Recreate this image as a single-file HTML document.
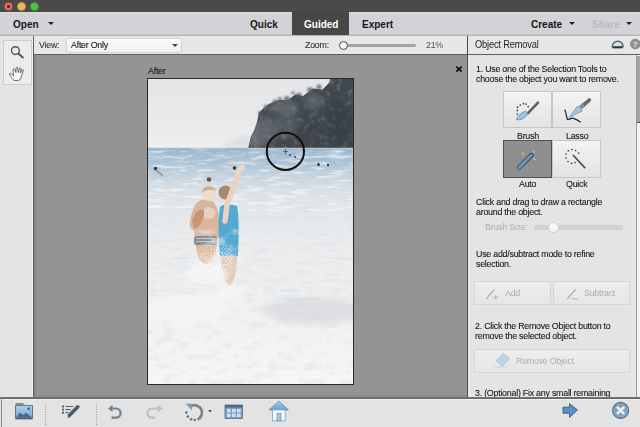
<!DOCTYPE html>
<html><head><meta charset="utf-8">
<style>
*{margin:0;padding:0;box-sizing:border-box}
html,body{width:640px;height:427px;overflow:hidden;background:#e4e4e4;font-family:"Liberation Sans",sans-serif;position:relative}
.a{position:absolute}
svg{display:block}
#title{left:0;top:0;width:640px;height:12px;background:#4a4a4b}
.tl{width:9px;height:9px;border-radius:50%;top:2px}
#menu{left:0;top:12px;width:640px;height:23px;background:#d3d2d6;border-top:1px solid #dddce0;border-bottom:1px solid #c6c6c8}
.mt{font-weight:bold;font-size:10px;color:#161616;top:18.5px;line-height:12px}
#guided{left:292px;top:11px;width:57px;height:25px;background:#474747}
.tri{width:0;height:0;border-left:3px solid transparent;border-right:3px solid transparent;border-top:3px solid #222}
#sep{left:0;top:35px;width:640px;height:2px;background:#b4b4b6}
#left{left:0;top:36px;width:33px;height:362px;background:#e4e4e4}
#lline{left:33px;top:36px;width:1px;height:362px;background:#626262}
#viewbar{left:34px;top:36px;width:433px;height:18px;background:#e7e7e7}
#canvas{left:34px;top:55px;width:433px;height:343px;background:#949494}
#vline2{left:34px;top:54px;width:606px;height:1px;background:#5e5e5e}
#rline{left:467px;top:36px;width:1px;height:362px;background:#4a4a4a}
#rpanel{left:468px;top:55px;width:172px;height:343px;background:#e4e4e7;border-left:2px solid #ebebed}
#rhead{left:468px;top:36px;width:172px;height:18px;background:#e7e7e7}
.t{font-size:9.5px;color:#151515;line-height:10px;white-space:nowrap;letter-spacing:-0.25px;transform:scaleX(0.93);transform-origin:0 0;-webkit-text-stroke:0.1px #151515}
.btn{background:linear-gradient(#f3f3f3,#e3e3e3);border:1px solid #c6c6c6}
.dis{color:#adadad;-webkit-text-stroke:0}
#bottom{left:0;top:399px;width:640px;height:28px;background:#e3e3e3;border-top:1px solid #f2f2f2}
.dots{width:0;border-left:1px dotted #9a9a9a}
</style></head><body>
<div class="a" id="title"></div>
<div class="a tl" style="left:4px;background:radial-gradient(circle,#5a2a20 0,#5a2a20 1.3px,#de7a62 1.8px,#de6a55 100%);border:1px solid #b8503e"></div>
<div class="a tl" style="left:17px;background:#e6bd55;border:1px solid #c49a3a"></div>
<div class="a tl" style="left:30px;background:#55c04c;border:1px solid #3c9a35"></div>
<div class="a" id="menu"></div>
<div class="a" id="guided"></div>
<div class="a mt" style="left:13px">Open</div>
<div class="a tri" style="left:48px;top:22px"></div>
<div class="a mt" style="left:250px">Quick</div>
<div class="a mt" style="left:304px;color:#fff">Guided</div>
<div class="a mt" style="left:362px">Expert</div>
<div class="a mt" style="left:531px">Create</div>
<div class="a tri" style="left:569px;top:22px"></div>
<div class="a mt" style="left:592px;color:#bcbcbf">Share</div>
<div class="a tri" style="left:626px;top:22px"></div>
<div class="a" id="sep"></div>
<div class="a" id="left"></div>
<div class="a" id="lline"></div>
<div class="a" id="viewbar"></div>
<div class="a" id="rhead"></div>
<div class="a" id="vline2"></div>
<div class="a" id="canvas"></div>
<div class="a" style="left:34px;top:55px;width:3px;height:343px;background:linear-gradient(90deg,#7a7a7a,#8c8c8c 60%,#949494)"></div>
<div class="a" style="left:32px;top:36px;width:1px;height:362px;background:#efefef"></div>
<div class="a" id="rline"></div>
<div class="a" id="rpanel"></div>

<!-- left tools -->
<div class="a" style="left:3px;top:40px;width:29px;height:45px;border:1px solid #cdcdcd;background:#ececec"></div>
<svg class="a" style="left:3px;top:40px" width="29" height="45" viewBox="3 40 29 45">
<circle cx="15.4" cy="50.6" r="3.9" fill="none" stroke="#555" stroke-width="1.4"/>
<path d="M18.4,53.6 L22.8,57.6" stroke="#555" stroke-width="2" stroke-linecap="round"/>
<path d="M9.6,73.6 C10.5,73 12,74.5 13.5,76 L13,69.8 C13,68.6 14.4,68.3 14.8,69.5 L15.8,72.5 L16.2,67.8 C16.3,66.8 17.6,66.8 17.7,67.8 L18.2,72.5 L19.6,68.5 C19.9,67.5 21.2,67.8 21,68.8 L20.3,73 L22.2,70 C22.7,69.2 23.8,69.7 23.4,70.6 L21.6,75.5 C21,78 20.2,80.5 18,80.5 L15,80.5 C13.5,80.5 12.5,79 11.5,77.5 C10.7,76.3 9.5,75 9.6,73.6 Z" fill="#f5f5f5" stroke="#5e5e5e" stroke-width="0.9" stroke-linejoin="round"/>
</svg>

<!-- view bar -->
<div class="a t" style="left:39px;top:40px;color:#333;-webkit-text-stroke:0.1px #333">View:</div>
<div class="a" style="left:66px;top:38px;width:116px;height:15px;border:1px solid #d2d2d2;background:linear-gradient(#fbfbfb,#eeeeee)"></div>
<div class="a t" style="left:71px;top:40px">After Only</div>
<div class="a tri" style="left:172px;top:44px;border-top-color:#444;border-left-width:3.5px;border-right-width:3.5px;border-top-width:3.5px"></div>
<div class="a t" style="left:305px;top:40px;color:#333;-webkit-text-stroke:0.1px #333">Zoom:</div>
<div class="a" style="left:340px;top:44px;width:76px;height:3px;border-radius:1.5px;background:#a3a3a3"></div>
<div class="a" style="left:338.5px;top:41px;width:9px;height:9px;border-radius:50%;border:1.3px solid #484848;background:#f4f4f4"></div>
<div class="a t" style="left:426px;top:40px;color:#555;-webkit-text-stroke:0">21%</div>

<!-- canvas -->
<div class="a t" style="left:148px;top:66px;color:#1a1a1a">After</div>
<svg class="a" style="left:455px;top:65px" width="8" height="8" viewBox="0 0 8 8"><path d="M1.3,1.6 L6.7,6.6 M6.7,1.6 L1.3,6.6" stroke="#111" stroke-width="1.9"/></svg>
<div class="a" style="left:147px;top:78px;width:207px;height:307px;background:#2a2a2a"></div>
<div class="a" id="photo" style="left:148px;top:79px;width:205px;height:305px;background:#eee;overflow:hidden"><svg width="205" height="305" viewBox="0 0 205 305">
<defs>
<linearGradient id="sky" x1="0" y1="0" x2="0" y2="68" gradientUnits="userSpaceOnUse">
<stop offset="0" stop-color="#e5e6e8"/><stop offset="0.6" stop-color="#e9e9eb"/><stop offset="1" stop-color="#efeff0"/>
</linearGradient>
<linearGradient id="sea" x1="0" y1="68" x2="0" y2="305" gradientUnits="userSpaceOnUse">
<stop offset="0" stop-color="#98b5cc"/><stop offset="0.06" stop-color="#a9c0d3"/><stop offset="0.11" stop-color="#c0cfdb"/><stop offset="0.18" stop-color="#d9e0e6"/><stop offset="0.26" stop-color="#e2e7ea"/><stop offset="0.45" stop-color="#ededee"/><stop offset="1" stop-color="#f6f6f6"/>
</linearGradient>
<linearGradient id="wmask" x1="0" y1="68" x2="0" y2="305" gradientUnits="userSpaceOnUse">
<stop offset="0" stop-color="#fff" stop-opacity="1"/><stop offset="0.5" stop-color="#fff" stop-opacity="0.7"/><stop offset="1" stop-color="#fff" stop-opacity="0.5"/>
</linearGradient>
<filter id="waves" x="0" y="0" width="100%" height="100%">
<feTurbulence type="fractalNoise" baseFrequency="0.04 0.22" numOctaves="3" seed="7"/>
<feColorMatrix type="matrix" values="0 0 0 0 0.68  0 0 0 0 0.75  0 0 0 0 0.81  0 0 0 -3.2 1.5"/>
<feComposite in2="SourceGraphic" operator="in"/>
</filter>
<filter id="foamf" x="0" y="0" width="100%" height="100%">
<feTurbulence type="fractalNoise" baseFrequency="0.07 0.12" numOctaves="4" seed="11"/>
<feColorMatrix type="matrix" values="0 0 0 0 0.8  0 0 0 0 0.81  0 0 0 0 0.83  0 0 0 -4.5 2.3"/>
<feComposite in2="SourceGraphic" operator="in"/>
</filter>
<filter id="tex" x="0" y="0" width="100%" height="100%">
<feTurbulence type="fractalNoise" baseFrequency="0.18" numOctaves="3" seed="3"/>
<feColorMatrix type="matrix" values="0 0 0 0 0.55  0 0 0 0 0.58  0 0 0 0 0.6  0 0 0 -2.2 1.05"/>
<feComposite in2="SourceGraphic" operator="in"/>
</filter>
<filter id="bl"><feGaussianBlur stdDeviation="0.6"/></filter>
<filter id="bl2"><feGaussianBlur stdDeviation="3"/></filter>
<clipPath id="cliffclip"><path id="cliffp" d="M182,0 L182,3 174.5,10.5 165,9.5 155,17 147.7,15.3 140,21 130,21 120.8,25 115,29.7 111,33.5 109,43 106.4,50.8 102.6,58.5 100.6,67 100,69 205,69 205,0 Z"/></clipPath>
</defs>
<rect width="205" height="305" fill="url(#sky)"/>
<path d="M70,68 C80,62 92,56 104,57 L104,68 Z" fill="#dcdee2" filter="url(#bl2)"/>
<rect y="68.8" width="205" height="237" fill="url(#sea)"/>
<rect y="69" width="205" height="160" fill="#fff" filter="url(#waves)" opacity="0.8"/>
<filter id="dwaves" x="0" y="0" width="100%" height="100%">
<feTurbulence type="fractalNoise" baseFrequency="0.06 0.35" numOctaves="3" seed="21"/>
<feColorMatrix type="matrix" values="0 0 0 0 0.5  0 0 0 0 0.61  0 0 0 0 0.71  0 0 0 -5 2.6"/>
<feComposite in2="SourceGraphic" operator="in"/>
</filter>
<linearGradient id="dwm" x1="0" y1="0" x2="0" y2="1"><stop offset="0" stop-color="#fff" stop-opacity="1"/><stop offset="1" stop-color="#fff" stop-opacity="0"/></linearGradient>
<rect y="69" width="205" height="50" fill="url(#dwm)" filter="url(#dwaves)" opacity="0.55"/>
<filter id="wwaves" x="0" y="0" width="100%" height="100%">
<feTurbulence type="fractalNoise" baseFrequency="0.05 0.3" numOctaves="3" seed="33"/>
<feColorMatrix type="matrix" values="0 0 0 0 1  0 0 0 0 1  0 0 0 0 1  0 0 0 -5 2.4"/>
<feComposite in2="SourceGraphic" operator="in"/>
</filter>
<rect y="72" width="205" height="60" fill="#fff" filter="url(#wwaves)" opacity="0.5"/>
<rect y="140" width="205" height="165" fill="#fff" filter="url(#foamf)" opacity="0.75"/>
<ellipse cx="165" cy="232" rx="50" ry="14" fill="#cfd2d5" opacity="0.55" filter="url(#bl2)"/>
<!-- cliff -->
<path d="M182,0 L182,3 174.5,10.5 165,9.5 155,17 147.7,15.3 140,21 130,21 120.8,25 115,29.7 111,33.5 109,43 106.4,50.8 102.6,58.5 100.6,67.5 100,69.5 205,69.5 205,0 Z" fill="#40474d"/>
<path d="M182,0 L182,3 174.5,10.5 165,9.5 155,17 147.7,15.3 140,21 130,21 120.8,25 115,29.7 111,33.5 109,43 106.4,50.8 102.6,58.5 100.6,67 100,69 205,69 205,0 Z" fill="#fff" filter="url(#tex)" opacity="0.38"/>
<g clip-path="url(#cliffclip)" filter="url(#bl2)" opacity="0.45">
<ellipse cx="108" cy="56" rx="9" ry="14" fill="#a0a6aa"/>
<ellipse cx="118" cy="52" rx="12" ry="14" fill="#858d92"/>
<ellipse cx="140" cy="45" rx="10" ry="14" fill="#6b7378"/>
<ellipse cx="135" cy="28" rx="16" ry="6" fill="#8a9196"/>
<ellipse cx="165" cy="22" rx="10" ry="8" fill="#7a8287"/>
<ellipse cx="192" cy="45" rx="12" ry="22" fill="#30373c"/>
<ellipse cx="160" cy="55" rx="14" ry="10" fill="#3a4146"/>
</g>
<filter id="bl3"><feGaussianBlur stdDeviation="1.3"/></filter>
<g fill="#5d656a" filter="url(#bl3)" opacity="0.85">
<circle cx="171" cy="8" r="2.5"/><circle cx="162" cy="11" r="2.8"/><circle cx="151" cy="16" r="2.5"/><circle cx="139" cy="20" r="3"/><circle cx="127" cy="23" r="2.5"/><circle cx="118" cy="28" r="2.2"/><circle cx="112" cy="34" r="2"/><circle cx="184" cy="3" r="2.5"/><circle cx="145" cy="14" r="1.8"/><circle cx="132" cy="20" r="2"/>
</g>
<path d="M100,69.3 H205" stroke="#cfd8df" stroke-width="1"/>
<!-- swimmers -->
<g fill="#3a3a3a">
<circle cx="7.5" cy="89.5" r="1.8"/>
<circle cx="142" cy="76" r="0.9"/>
<circle cx="147" cy="78" r="0.9"/>
<circle cx="170.5" cy="85.5" r="1.5"/>
<circle cx="180" cy="86" r="1.2"/>
</g>
<path d="M8,91 L15,97" stroke="#9a8a80" stroke-width="1.6"/>
<!-- children -->
<g filter="url(#bl)">
<!-- left child -->
<path d="M47,126 C50,121 58,119 64,122 C70,126 72,138 71,150 L69,166 C67,176 64,184 58,185 C52,184 49,176 48,168 L46,152 C42,150 41,146 42,142 C43,136 45,130 47,126 Z" fill="#d9b59a"/>
<path d="M44,142 C46,134 52,128 56,132 C56,140 52,148 46,150 Z" fill="#c49676"/>
<path d="M56,130 C60,126 66,128 68,134 C66,140 60,142 56,138 Z" fill="#e8d0bc"/>
<rect x="46" y="157" width="23" height="9" rx="3" fill="#858c92"/>
<path d="M48,159.5 h19 M48,162.5 h19" stroke="#c3cbd1" stroke-width="1"/>
<circle cx="61" cy="115" r="7" fill="#ecdccb"/>
<path d="M54,114 C54,106 66,105 68,112 C64,110 58,110 54,114 Z" fill="#cfae8c"/>
<circle cx="61" cy="100.5" r="2.3" fill="#6b5648"/>
<!-- right child -->
<path d="M72,128 C75,125 82,125 89,127 C91,135 91,160 90,177 L72,177 C70,160 70,140 72,128 Z" fill="#52a9d2"/>
<path d="M73,177 L89,177 C89,190 87,202 82,207 C77,205 74,195 73,177 Z" fill="#dcc0aa"/>
<circle cx="77.5" cy="113.5" r="7" fill="#a88a6c"/>
<path d="M77,142 L79,126 L91,93" stroke="#ead2be" stroke-width="5.5" stroke-linecap="round" fill="none"/>
<path d="M89,94 L95,87" stroke="#ecd6c4" stroke-width="4" stroke-linecap="round"/>
<circle cx="86.5" cy="89" r="1.8" fill="#3a3030"/>
</g>
<filter id="spk" x="0" y="0" width="100%" height="100%">
<feTurbulence type="fractalNoise" baseFrequency="0.9" numOctaves="1" seed="5"/>
<feColorMatrix type="matrix" values="0 0 0 0 1  0 0 0 0 1  0 0 0 0 1  0 0 0 -7 4.0"/>
<feComposite in2="SourceGraphic" operator="in"/>
</filter>
<radialGradient id="rg"><stop offset="0" stop-color="#fff" stop-opacity="1"/><stop offset="0.6" stop-color="#fff" stop-opacity="0.6"/><stop offset="1" stop-color="#fff" stop-opacity="0"/></radialGradient>
<ellipse cx="68" cy="185" rx="30" ry="26" fill="url(#rg)" filter="url(#spk)" opacity="0.7"/>
<!-- splash -->
<rect x="35" y="150" width="70" height="70" fill="#fff" filter="url(#foamf)" opacity="0.55"/>
<g fill="#f6f7f8" opacity="0.75" filter="url(#bl2)">
<ellipse cx="58" cy="196" rx="22" ry="9"/>
<ellipse cx="82" cy="214" rx="16" ry="9"/>
<ellipse cx="40" cy="230" rx="40" ry="14"/>
</g>
<circle cx="137.4" cy="72.4" r="18.6" fill="none" stroke="#111" stroke-width="2"/>
<path d="M137.5,70 v5 M135,72.5 h5" stroke="#333" stroke-width="0.6"/>
</svg>
</div>

<!-- right panel -->
<div class="a t" style="left:475px;top:40px;font-size:10px;letter-spacing:-0.2px;-webkit-text-stroke:0;color:#1e1e1e">Object Removal</div>
<svg class="a" style="left:610px;top:38px" width="30" height="14" viewBox="610 38 30 14">
<path d="M612.3,46.8 A5.4,5.6 0 0 1 623.1,46.8 Z" fill="#d2e6f0" stroke="#5d6166" stroke-width="1.5"/>
<path d="M612.6,47.6 H622.4" stroke="#30363c" stroke-width="1.5"/>
<circle cx="635.3" cy="44" r="4.8" fill="#929292" stroke="#7a7a7a" stroke-width="0.8"/>
<text x="635.3" y="47" font-size="8" font-weight="bold" text-anchor="middle" fill="#e6e6e6" font-family="Liberation Sans">?</text>
</svg>
<div class="a" style="left:636px;top:55px;width:1px;height:343px;background:#9a9a9a"></div>
<div class="a" style="left:637px;top:55px;width:3px;height:343px;background:#f3f3f3"></div>
<div class="a" style="left:637px;top:56px;width:3px;height:66px;background:#a4a4a4"></div>
<div class="a" style="left:637px;top:122px;width:3px;height:1px;background:#555"></div>
<div class="a t" style="left:476px;top:63.5px;line-height:10px">1. Use one of the Selection Tools to<br>choose the object you want to remove.</div>
<div class="a btn" style="left:503px;top:91px;width:49px;height:37px"></div>
<div class="a btn" style="left:552px;top:91px;width:49px;height:37px"></div>
<div class="a" style="left:503px;top:140px;width:49px;height:38px;background:#8f8f8f;border:1px solid #505050"></div>
<div class="a btn" style="left:552px;top:140px;width:49px;height:38px"></div>
<svg class="a" style="left:503px;top:91px" width="98" height="87" viewBox="503 91 98 87">
<!-- brush -->
<path d="M538,102.7 L527.8,113.3" stroke="#5f5f5f" stroke-width="2.6" stroke-linecap="round"/>
<path d="M527.8,112.8 C526.5,117 523,120 517,119.8 C516,119.7 516.5,118.5 517,118 C518.5,115.5 521,112.5 525.5,111.3 Z" fill="#9cc2df" stroke="#5f86a6" stroke-width="0.8"/>
<g fill="#3c3c3c"><circle cx="517.6" cy="107.2" r="0.85"/><circle cx="520.3" cy="105" r="0.85"/><circle cx="523.4" cy="103.7" r="0.85"/><circle cx="526" cy="104" r="0.85"/><circle cx="528.2" cy="106.6" r="0.85"/><circle cx="517.3" cy="110.4" r="0.85"/><circle cx="517.3" cy="114" r="0.85"/></g>
<!-- lasso -->
<path d="M589.3,100.1 L583,105.5" stroke="#6a6a6a" stroke-width="3.8" stroke-linecap="round"/>
<path d="M583.5,104.8 L580,108" stroke="#8c8c8c" stroke-width="4.4"/>
<path d="M577.5,106 L582.5,111 L569,117.5 Z" fill="#a0c5e1" stroke="#6a94b5" stroke-width="0.7"/>
<path d="M564.6,109.6 C566.5,112 566,117 567.5,119.5 C569,120 571.5,117.5 573.5,118.3 C576,119 578.5,120.5 580.6,122.2" fill="none" stroke="#222" stroke-width="1.2"/>
<!-- auto -->
<path d="M531.3,155.3 L519.3,167.4" stroke="#2e3d4a" stroke-width="4.6" stroke-linecap="round"/>
<path d="M531.3,155.3 L519.3,167.4" stroke="#6f98bd" stroke-width="3" stroke-linecap="round"/>
<circle cx="523" cy="153.8" r="1.6" fill="#d9a070"/>
<circle cx="533.6" cy="151.5" r="1.3" fill="#a8b890"/>
<circle cx="534.4" cy="159" r="1" fill="#cfcfcf"/>
<!-- quick -->
<path d="M573.2,155.3 L584.7,167.6" stroke="#4a4a4a" stroke-width="1.6" stroke-linecap="round"/>
<g fill="#444"><circle cx="568.3" cy="150.8" r="0.85"/><circle cx="572" cy="149.5" r="0.85"/><circle cx="575.7" cy="150.5" r="0.85"/><circle cx="578.6" cy="153" r="0.85"/><circle cx="566" cy="154" r="0.85"/><circle cx="566" cy="158" r="0.85"/><circle cx="568" cy="161.5" r="0.85"/><circle cx="571.5" cy="163.3" r="0.85"/><circle cx="575" cy="162.5" r="0.85"/></g>
</svg>
<div class="a t" style="left:517px;top:131px">Brush</div>
<div class="a t" style="left:566px;top:131px">Lasso</div>
<div class="a t" style="left:519px;top:179px">Auto</div>
<div class="a t" style="left:566px;top:179px">Quick</div>
<div class="a t" style="left:476px;top:197px">Click and drag to draw a rectangle<br>around the object.</div>
<div class="a t dis" style="left:485px;top:222px">Brush Size:</div>
<div class="a" style="left:534px;top:224.5px;width:89px;height:5px;border-radius:3px;background:#d2d2d2"></div>
<div class="a" style="left:548px;top:221.5px;width:11px;height:11px;border-radius:50%;background:#f7f7f7;border:1px solid #cecece"></div>
<div class="a t" style="left:476px;top:249px">Use add/subtract mode to refine<br>selection.</div>
<div class="a" style="left:474px;top:281px;width:77px;height:24px;border:1px solid #d5d5d5;background:linear-gradient(#ededed,#e6e6e6)"></div>
<div class="a" style="left:553px;top:281px;width:77px;height:24px;border:1px solid #d5d5d5;background:linear-gradient(#ededed,#e6e6e6)"></div>
<svg class="a" style="left:474px;top:281px" width="156" height="92" viewBox="474 281 156 92">
<path d="M494.5,289.6 L488.5,296 C487.5,297 487.5,298.5 486.5,299" stroke="#b3b3b3" stroke-width="1.4" fill="none"/>
<path d="M495.8,294.8 v5 M493.3,297.3 h5" stroke="#b3b3b3" stroke-width="1"/>
<path d="M575.7,289.6 L569.5,296 C568.5,297 568.5,298.5 567,299" stroke="#b3b3b3" stroke-width="1.4" fill="none"/>
<path d="M571.5,298.8 h6.5" stroke="#b3b3b3" stroke-width="1"/>
<path d="M497,360 L503,354 L509,358.5 L503,365 Z" fill="#bcd2e6" stroke="#a6c0d8" stroke-width="0.8"/>
<path d="M495,366.5 h12" stroke="#c4d4e2" stroke-width="1"/>
</svg>
<div class="a t dis" style="left:504.5px;top:288px">Add</div>
<div class="a t dis" style="left:583.5px;top:288px">Subtract</div>
<div class="a t" style="left:475px;top:321px">2. Click the Remove Object button to<br>remove the selected object.</div>
<div class="a" style="left:474px;top:349px;width:156px;height:24px;border:1px solid #d5d5d5;background:linear-gradient(#ededed,#e6e6e6)"></div>
<svg class="a" style="left:474px;top:349px" width="40" height="24" viewBox="474 349 40 24">
<path d="M496,361 L503,353.5 L509.5,358.5 L502.5,366 Z" fill="#bcd3e8" stroke="#a4bfd8" stroke-width="0.8"/>
<path d="M494.5,367 h13" stroke="#bfd0e0" stroke-width="1"/>
</svg>
<div class="a t dis" style="left:516px;top:356px">Remove Object</div>
<div class="a t" style="left:475px;top:388px">3. (Optional) Fix any small remaining</div>

<!-- bottom bar -->
<div class="a" id="bottom"></div>
<div class="a" style="left:0;top:397px;width:640px;height:2px;background:linear-gradient(#7c7c7c,#5e5e5e)"></div>
<div class="a" style="left:34px;top:395px;width:433px;height:2px;background:linear-gradient(#939393,#858585)"></div>
<div class="a" style="left:1px;top:398px;width:1px;height:29px;background:#8a8a8a"></div>
<svg class="a" style="left:0;top:398px" width="640" height="29" viewBox="0 398 640 29">
<defs>
<linearGradient id="gph" x1="0" y1="0" x2="0" y2="1"><stop offset="0" stop-color="#a6d0f0"/><stop offset="1" stop-color="#7aaad2"/></linearGradient>
<linearGradient id="groof" x1="0" y1="0" x2="0" y2="1"><stop offset="0" stop-color="#a4d0f2"/><stop offset="1" stop-color="#6a9ecb"/></linearGradient>
</defs>
<!-- photo bin icon -->
<path d="M15.6,404 h8" stroke="#5b6672" stroke-width="1.4"/>
<rect x="15.5" y="405.5" width="17" height="12.5" fill="url(#gph)" stroke="#6b7885" stroke-width="1"/>
<path d="M16,417.5 L20,412.5 L23,415 L26,412.8 L32,417.5 Z" fill="#4a6985"/>
<circle cx="28.7" cy="408.7" r="1.4" fill="#4a6985"/>
<path d="M15.5,418.6 h17" stroke="#4c5661" stroke-width="1.4"/>
<!-- separators -->
<path d="M45.5,404 V425" stroke="#9a9a9a" stroke-width="1" stroke-dasharray="1 1.5"/>
<path d="M96.5,404 V425" stroke="#9a9a9a" stroke-width="1" stroke-dasharray="1 1.5"/>
<!-- list pen -->
<g fill="#56687a"><rect x="62" y="405.5" width="2" height="2"/><rect x="62" y="408.6" width="2" height="2"/><rect x="62" y="411.7" width="2" height="2"/></g>
<path d="M65.5,406.5 h8 M65.5,409.6 h5 M65.5,412.7 h3" stroke="#56687a" stroke-width="1.2"/>
<path d="M77.8,406.8 L69.5,415.2" stroke="#4a5c6e" stroke-width="3.6" stroke-linecap="round"/>
<path d="M68.8,414.3 L67.5,418.3 L70.8,416.8 Z" fill="#4a5c6e"/>
<!-- undo -->
<path d="M111.5,408.5 H116 A4.6,4.6 0 0 1 116,417.7 H111.5" fill="none" stroke="#6d8597" stroke-width="2.2"/>
<path d="M108,408.5 L112.5,404.8 L112.5,412.2 Z" fill="#6d8597"/>
<!-- redo -->
<path d="M158.5,408.5 H152 A4.6,4.6 0 0 0 152,417.7 H155" fill="none" stroke="#b6c0c8" stroke-width="2.2"/>
<path d="M162.5,408.5 L158,404.8 L158,412.2 Z" fill="#b6c0c8"/>
<!-- rotate -->
<path d="M191.5,405.8 A7,7 0 1 1 197.5,419.5" fill="none" stroke="#7f8388" stroke-width="2.8"/>
<path d="M185.5,403.8 h6.5 v6.5 Z" fill="#7c9bb6"/>
<g fill="#6f7378"><circle cx="186.3" cy="412.6" r="1.3"/><circle cx="187.8" cy="416.6" r="1.3"/><circle cx="191.2" cy="419.3" r="1.3"/><circle cx="194.8" cy="420" r="1.3"/></g>
<path d="M208,410 h4 l-2,2.5 Z" fill="#555"/>
<!-- grid -->
<rect x="225" y="405" width="17.5" height="13.5" fill="#7ea0c2" stroke="#56708c" stroke-width="0.8"/>
<rect x="225" y="405" width="17.5" height="2.6" fill="#4a6a8c"/>
<g fill="#d2e0ee"><rect x="227" y="409" width="3.6" height="3.4"/><rect x="232" y="409" width="3.6" height="3.4"/><rect x="237" y="409" width="3.6" height="3.4"/><rect x="227" y="413.6" width="3.6" height="3.4"/><rect x="232" y="413.6" width="3.6" height="3.4"/><rect x="237" y="413.6" width="3.6" height="3.4"/></g>
<!-- home -->
<path d="M278.8,401.2 L288.3,409.9 H269.3 Z" fill="url(#groof)" stroke="#4f80ad" stroke-width="0.8"/>
<rect x="272.6" y="409.9" width="12.6" height="11" fill="#f3f7fb" stroke="#7eaad2" stroke-width="0.9"/>
<rect x="277" y="413.6" width="4" height="7.3" fill="#a8c6e2" stroke="#5a82a8" stroke-width="0.6"/>
<!-- next arrow -->
<path d="M563,407.2 H569.5 V403.6 L577.5,410 L569.5,417.4 V413.2 H563 Z" fill="#5b91c2" stroke="#3c5c7c" stroke-width="0.9"/>
<!-- cancel -->
<circle cx="620.6" cy="410.4" r="8" fill="#86a3bd" stroke="#5a7088" stroke-width="1.1"/>
<path d="M617,406.8 L624.2,414 M624.2,406.8 L617,414" stroke="#f2f6fa" stroke-width="2.4"/>
</svg>
</body></html>
